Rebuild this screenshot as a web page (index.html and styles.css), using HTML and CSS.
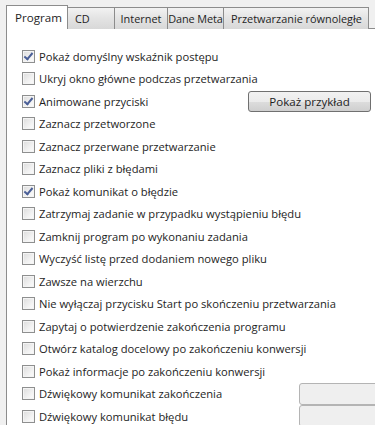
FILE: index.html
```html
<!DOCTYPE html>
<html>
<head>
  <meta charset="UTF-8" />
  <link rel="stylesheet" href="styles.css">
</head>
<body>
  <div class="tabs">
    <div class="tab active">Program</div>
    <div class="tab tab-cd">CD</div>
    <div class="tab tab-net">Internet</div>
    <div class="tab tab-meta">Dane Meta</div>
    <div class="tab">Przetwarzanie równoległe</div>
  </div>

  <div class="panel">
    <div class="row"><label class="opt"><span class="cb checked"></span>Pokaż domyślny wskaźnik postępu</label></div>
    <div class="row"><label class="opt"><span class="cb"></span>Ukryj okno główne podczas przetwarzania</label></div>
    <div class="row"><label class="opt"><span class="cb checked"></span>Animowane przyciski</label><button class="btn">Pokaż przykład</button></div>
    <div class="row"><label class="opt"><span class="cb"></span>Zaznacz przetworzone</label></div>
    <div class="row"><label class="opt"><span class="cb"></span>Zaznacz przerwane przetwarzanie</label></div>
    <div class="row"><label class="opt"><span class="cb"></span>Zaznacz pliki z błędami</label></div>
    <div class="row"><label class="opt"><span class="cb checked"></span>Pokaż komunikat o błędzie</label></div>
    <div class="row"><label class="opt"><span class="cb"></span>Zatrzymaj zadanie w przypadku wystąpieniu błędu</label></div>
    <div class="row"><label class="opt"><span class="cb"></span>Zamknij program po wykonaniu zadania</label></div>
    <div class="row"><label class="opt"><span class="cb"></span>Wyczyść listę przed dodaniem nowego pliku</label></div>
    <div class="row"><label class="opt"><span class="cb"></span>Zawsze na wierzchu</label></div>
    <div class="row"><label class="opt"><span class="cb"></span>Nie wyłączaj przycisku Start po skończeniu przetwarzania</label></div>
    <div class="row"><label class="opt"><span class="cb"></span>Zapytaj o potwierdzenie zakończenia programu</label></div>
    <div class="row"><label class="opt"><span class="cb"></span>Otwórz katalog docelowy po zakończeniu konwersji</label></div>
    <div class="row"><label class="opt"><span class="cb"></span>Pokaż informacje po zakończeniu konwersji</label></div>
    <div class="row"><label class="opt"><span class="cb"></span>Dźwiękowy komunikat zakończenia</label><div class="field"></div></div>
    <div class="row"><label class="opt"><span class="cb"></span>Dźwiękowy komunikat błędu</label><div class="field"></div></div>
  </div>
</body>
</html>
```

FILE: styles.css
```css
* { box-sizing: border-box; }
body {
  margin: 0;
  width: 375px;
  height: 425px;
  overflow: hidden;
  background: #f0f0f0;
  font-family: "Open Sans", "Noto Sans", sans-serif;
  font-size: 11.2px;
  color: #1e1e1e;
}
.tabs {
  display: flex;
  padding: 5px 0 0 6px;
  height: 29px;
  white-space: nowrap;
  position: relative;
  z-index: 1;
}
.tab {
  flex-shrink: 0;
  height: 22px;
  margin-top: 2px;
  padding: 2px 6px 0 7px;
  border: 1px solid #8c8c8c;
  border-left: none;
  border-bottom: none;
  background: linear-gradient(#f2f2f2, #e3e3e3 50%, #d8d8d8);
  line-height: 18px;
  font-size: 10.9px;
}
.tab-cd { width: 47px; }
.tab-net { width: 53px; padding: 2px 0 0; text-align: center; }
.tab-meta { width: 56px; padding: 2px 0 0; text-align: center; letter-spacing: -0.1px; }
.tab.active {
  height: 24px;
  margin-top: 0;
  padding: 3px 8px 0 8px;
  border-left: 1px solid #8c8c8c;
  background: #fff;
  width: 62px;
  font-size: 11.6px;
}
.panel {
  margin: -1px 0 0 6px;
  height: 400px;
  background: #fff;
  border-top: 1px solid #8c8c8c;
  border-left: 1px solid #8c8c8c;
  padding: 16px 0 0 15px;
  display: flex;
  flex-direction: column;
}
.row {
  height: 22.5px;
  display: flex;
  align-items: center;
  justify-content: space-between;
  flex-shrink: 0;
}
.opt {
  display: flex;
  align-items: center;
  gap: 4px;
  white-space: nowrap;
}
.cb {
  width: 13px;
  height: 13px;
  border: 1px solid #8e8f8f;
  background: linear-gradient(135deg, #dcdcdc, #f5f5f5 70%, #fbfbfb);
  box-shadow: inset 0 0 0 1px #f4f4f4;
  position: relative;
}
.cb.checked::after {
  content: "";
  position: absolute;
  left: 3px;
  top: 0px;
  width: 3px;
  height: 7px;
  border: solid #4a5f97;
  border-width: 0 2px 2px 0;
  transform: rotate(40deg);
}
.btn {
  width: 123px;
  height: 21px;
  margin-right: 4px;
  border: 1px solid #707070;
  border-radius: 3px;
  background: linear-gradient(#f2f2f2, #ebebeb 50%, #dddddd 51%, #cfcfcf);
  font-family: inherit;
  font-size: 11.6px;
  color: #1e1e1e;
  padding: 0;
}
.field {
  width: 80px;
  height: 22px;
  margin-right: -4px;
  border: 1px solid #b4b4b4;
  border-radius: 3px;
  background: #efefef;
}
```
